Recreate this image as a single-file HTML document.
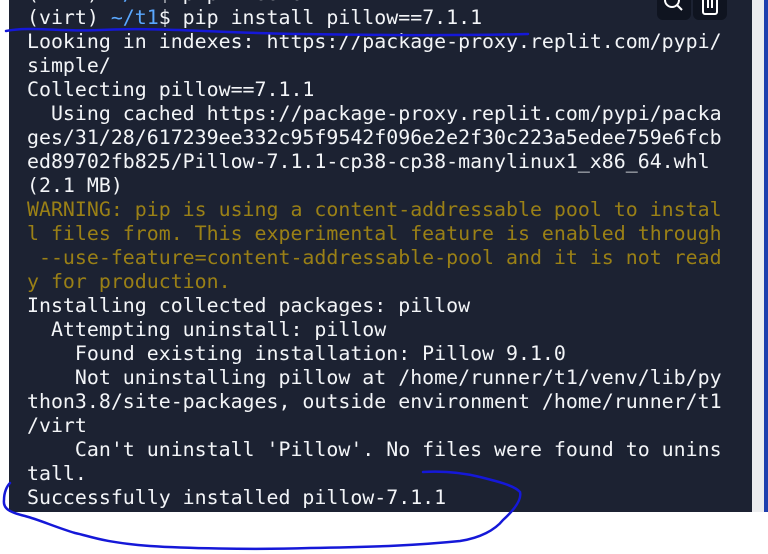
<!DOCTYPE html>
<html><head><meta charset="utf-8"><style>
html,body{margin:0;padding:0;width:768px;height:554px;overflow:hidden;background:#fff;}
#panel{position:absolute;left:9px;top:0;width:743px;height:512px;background:#1c2232;overflow:hidden;}
#strip{position:absolute;left:752px;top:0;width:12px;height:512px;background:#ebecee;}
#blue{position:absolute;left:764px;top:0;width:4px;height:512px;background:#1f3fae;}
pre{position:absolute;left:18px;top:-18px;margin:0;font-family:"DejaVu Sans Mono","Liberation Mono",monospace;font-size:19.9px;line-height:24px;color:#f3f5f8;}
.b{color:#5aa8ff;}
.w{color:#9a8016;}
.btn{position:absolute;top:-14px;width:34px;height:34px;background:#0f1420;border-radius:6px;}
svg.ann{position:absolute;left:0;top:0;}
</style></head><body>
<div id="panel">
<pre>(virt) <span class="b">~/t1</span>$ pip freeze
(virt) <span class="b">~/t1</span>$ pip install pillow==7.1.1
Looking in indexes: https://package-proxy.replit.com/pypi/
simple/
Collecting pillow==7.1.1
  Using cached https://package-proxy.replit.com/pypi/packa
ges/31/28/617239ee332c95f9542f096e2e2f30c223a5edee759e6fcb
ed89702fb825/Pillow-7.1.1-cp38-cp38-manylinux1_x86_64.whl
(2.1 MB)
<span class="w">WARNING: pip is using a content-addressable pool to instal
l files from. This experimental feature is enabled through
 --use-feature=content-addressable-pool and it is not read
y for production.</span>
Installing collected packages: pillow
  Attempting uninstall: pillow
    Found existing installation: Pillow 9.1.0
    Not uninstalling pillow at /home/runner/t1/venv/lib/py
thon3.8/site-packages, outside environment /home/runner/t1
/virt
    Can't uninstall 'Pillow'. No files were found to unins
tall.
Successfully installed pillow-7.1.1</pre>
<div class="btn" style="left:648px"><svg width="34" height="34"><circle cx="15" cy="14" r="7" fill="none" stroke="#fff" stroke-width="2"/><line x1="20" y1="19" x2="25" y2="24" stroke="#fff" stroke-width="2"/></svg></div>
<div class="btn" style="left:684px"><svg width="34" height="34"><rect x="10" y="6" width="14" height="22" rx="2" fill="none" stroke="#fff" stroke-width="2"/><line x1="15" y1="12" x2="15" y2="22" stroke="#fff" stroke-width="2"/><line x1="19" y1="12" x2="19" y2="22" stroke="#fff" stroke-width="2"/></svg></div>
</div>
<div id="strip"></div><div id="blue"></div>
<svg class="ann" width="768" height="554"><path d="M6 31 C30 26,60 32,100 30 C160 27,220 33,300 34 C380 35,450 36,528 34" fill="none" stroke="#1518d8" stroke-width="2.5" stroke-linecap="round"/>
<path d="M281 472 C300 468,330 470,350 476 C362 480,356 488,352 500 C345 520,320 534,305 539 C290 542,200 546,130 545 C90 544,62 540,55 536 C40 528,20 522,6 514 C2 508,3 500,6 490 C7 485,9 483,10 482" fill="none" stroke="#1518d8" stroke-width="2.5" stroke-linecap="round" transform="translate(0,0)" opacity="0"/>
<path d="M423 472 C440 471,460 472,480 477 C500 482,515 486,520 492 C522 500,514 510,503 520 C495 530,480 538,460 541 C420 545,380 547,310 548 C250 550,180 548,150 546 C100 542,90 536,75 533 C55 527,40 520,25 516 C8 512,3 508,4 500 C4 492,7 486,10 483" fill="none" stroke="#1518d8" stroke-width="2.5" stroke-linecap="round"/></svg>
</body></html>
